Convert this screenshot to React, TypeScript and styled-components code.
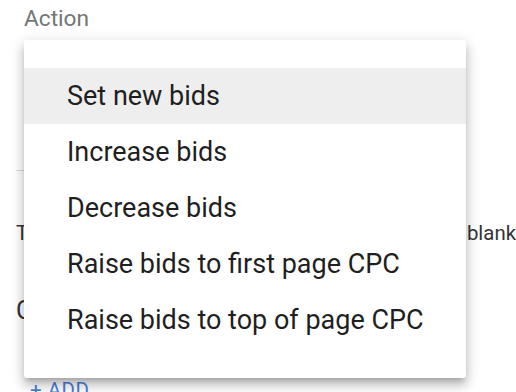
import styled, { createGlobalStyle } from "styled-components";

const GlobalStyle = createGlobalStyle`
  html, body {
    margin: 0;
    padding: 0;
    background: #ffffff;
  }
  body {
    font-family: Roboto, "Liberation Sans", Arial, sans-serif;
    -webkit-font-smoothing: antialiased;
  }
`;

const Page = styled.div`
  position: relative;
  width: 516px;
  height: 392px;
  overflow: hidden;
  padding-left: 16px;
  box-sizing: border-box;
`;

const Field = styled.div`
  display: flex;
  flex-direction: column;
  width: 424px;
  height: 171px;
  border-bottom: 1px solid #dcdcdc;
  box-sizing: border-box;
`;

const FieldLabel = styled.label`
  margin: 7px 0 0 8px;
  font-size: 22.7px;
  line-height: 24px;
  color: #757575;
`;

const Hint = styled.div`
  display: flex;
  justify-content: space-between;
  margin-top: 50px;
  font-size: 20.4px;
  line-height: 24px;
  color: #333333;
  white-space: nowrap;
`;

const Heading = styled.h3`
  margin: 51px 0 0;
  font-size: 25px;
  font-weight: 400;
  line-height: 30px;
  color: #333333;
`;

const AddButton = styled.button`
  margin: 52px 0 0 14px;
  padding: 0;
  border: none;
  background: none;
  font-family: inherit;
  font-size: 20.5px;
  line-height: 24px;
  color: #4a7fd8;
  letter-spacing: 0.5px;
`;

const Menu = styled.ul`
  position: absolute;
  left: 24px;
  top: 40px;
  width: 442px;
  margin: 0;
  padding: 28px 0 30px;
  list-style: none;
  background: #ffffff;
  border-radius: 3px;
  box-shadow: 0 5px 5px -3px rgba(0, 0, 0, 0.2),
    0 8px 10px 1px rgba(0, 0, 0, 0.14), 0 3px 14px 2px rgba(0, 0, 0, 0.12);
`;

const MenuItem = styled.li<{ $active?: boolean }>`
  height: 56px;
  padding-left: 43px;
  font-size: 27px;
  line-height: 56px;
  color: #1f1f1f;
  white-space: nowrap;
  background: ${(p) => (p.$active ? "#eeeeee" : "transparent")};
`;

const options = [
  "Set new bids",
  "Increase bids",
  "Decrease bids",
  "Raise bids to first page CPC",
  "Raise bids to top of page CPC",
];

export default function App() {
  return (
    <>
      <GlobalStyle />
      <Page>
        <Field>
          <FieldLabel>Action</FieldLabel>
        </Field>
        <Hint>
          <span>The new bid is applied</span>
          <span>if left blank</span>
        </Hint>
        <Heading>Conditions</Heading>
        <AddButton>+ ADD</AddButton>

        <Menu>
          {options.map((opt, i) => (
            <MenuItem key={opt} $active={i === 0}>
              {opt}
            </MenuItem>
          ))}
        </Menu>
      </Page>
    </>
  );
}
